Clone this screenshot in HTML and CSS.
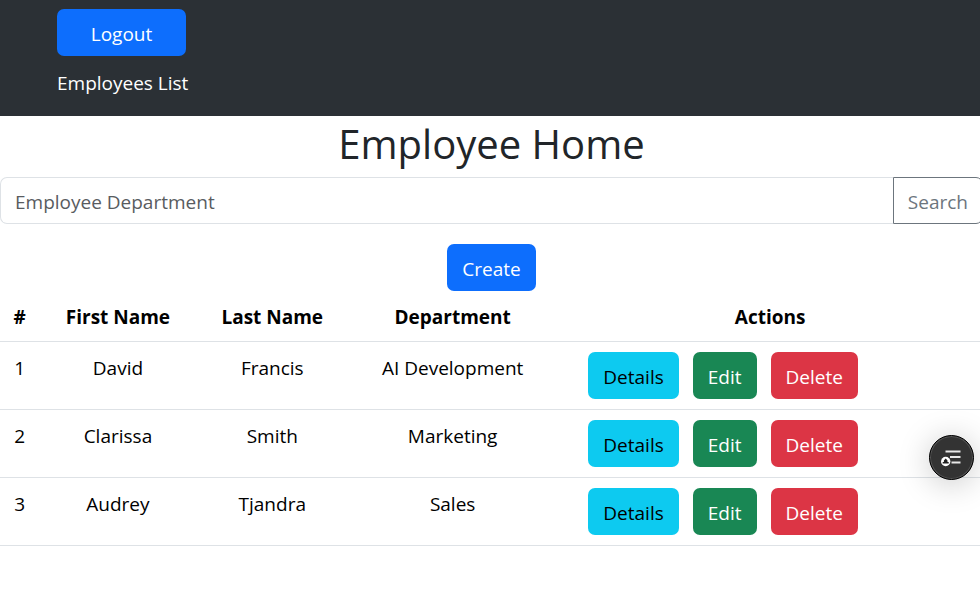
FILE: index.html
```html
<!DOCTYPE html>
<html lang="en">
<head>
<meta charset="utf-8">
<meta name="viewport" content="width=device-width, initial-scale=1">
<title>Employee Home</title>
<link rel="stylesheet" href="styles.css">
</head>
<body>
<nav class="navbar">
  <button type="button" class="btn btn-primary btn-logout">Logout</button>
  <a class="nav-link" href="#">Employees List</a>
</nav>
<main class="page">
  <h1 class="title">Employee Home</h1>
  <form class="search">
    <input class="search-input" type="text" placeholder="Employee Department" aria-label="Employee Department">
    <button type="button" class="btn btn-search">Search</button>
  </form>
  <div class="toolbar"><a class="btn btn-primary" href="#">Create</a></div>
  <table class="table">
    <colgroup><col class="col-id"><col class="col-first"><col class="col-last"><col class="col-dept"><col></colgroup>
    <thead>
      <tr><th scope="col">#</th><th scope="col">First Name</th><th scope="col">Last Name</th><th scope="col">Department</th><th scope="col">Actions</th></tr>
    </thead>
    <tbody>
      <tr><td>1</td><td>David</td><td>Francis</td><td>AI Development</td><td class="actions-cell"><div class="actions"><a class="btn btn-info" href="#">Details</a><a class="btn btn-success" href="#">Edit</a><button type="button" class="btn btn-danger">Delete</button></div></td></tr>
      <tr><td>2</td><td>Clarissa</td><td>Smith</td><td>Marketing</td><td class="actions-cell"><div class="actions"><a class="btn btn-info" href="#">Details</a><a class="btn btn-success" href="#">Edit</a><button type="button" class="btn btn-danger">Delete</button></div></td></tr>
      <tr><td>3</td><td>Audrey</td><td>Tjandra</td><td>Sales</td><td class="actions-cell"><div class="actions"><a class="btn btn-info" href="#">Details</a><a class="btn btn-success" href="#">Edit</a><button type="button" class="btn btn-danger">Delete</button></div></td></tr>
    </tbody>
  </table>
</main>
<button type="button" class="fab" aria-label="Open reader tools">
  <svg viewBox="0 0 22 18" width="22" height="18" aria-hidden="true">
    <path d="M4.500 2.500H19.500M9 8H19.500M10.500 13.500H19.500" stroke="#e8e8e8" stroke-width="1.800"/>
    <circle cx="4.700" cy="12.500" r="4.700" fill="#fff"/>
    <path d="M4.700 9.500L6.500 11.500V13H7.700V14.500H1.700V13H2.900V11.500Z" fill="#222"/>
  </svg>
</button>
</body>
</html>
```
FILE: styles.css
```css
* { box-sizing: border-box; }

body {
  margin: 0;
  overflow-x: hidden;
  background: #fff;
  color: #212529;
  font: 19px/30px "Segoe UI", "Open Sans", sans-serif;
}

.navbar {
  display: flex;
  flex-direction: column;
  align-items: flex-start;
  gap: 12px;
  padding: 9px 57px 18px;
  background: #2b3035;
}

.nav-link { color: #fff; text-decoration: none; }

.btn {
  display: inline-block;
  padding: 9px 14px 6px;
  border: 1px solid transparent;
  border-radius: 7px;
  font: inherit;
  text-align: center;
  text-decoration: none;
  cursor: pointer;
}

.btn-primary { background: #0d6efd; color: #fff; }
.btn-info { background: #0dcaf0; color: #000; }
.btn-success { background: #198754; color: #fff; }
.btn-danger { background: #dc3545; color: #fff; }
.btn-logout { min-width: 129px; }

/* The full-bleed row runs slightly past the right edge. */
.page { margin-right: -3px; }

.title {
  margin: 0;
  padding: 4px 0 9px;
  font-size: 40px;
  font-weight: 400;
  line-height: 48px;
  text-align: center;
}

.search { display: flex; }

.search-input {
  flex: 1;
  min-width: 0;
  padding: 9px 14px 6px;
  border: 1px solid #dee2e6;
  border-right: 0;
  border-radius: 7px 0 0 7px;
  background: #fff;
  color: #212529;
  font: inherit;
}

.search-input::placeholder { color: #595c5f; opacity: 1; }

.btn-search {
  min-width: 90px;
  border-color: #6c757d;
  border-radius: 0 7px 7px 0;
  background: #fff;
  color: #6c757d;
}

.toolbar { display: flex; justify-content: center; padding-top: 20px; }

.table {
  width: 100%;
  table-layout: fixed;
  border-collapse: separate;
  border-spacing: 0;
  color: #000;
  text-align: center;
}

.col-id { width: 4%; }
.col-first { width: 16%; }
.col-last { width: 15.4%; }
.col-dept { width: 21.3%; }

.table th,
.table td {
  padding: 11px 10px 9px;
  border-bottom: 1px solid #dee2e6;
  vertical-align: top;
}

.table th { font-weight: 700; }
.table .actions-cell { padding: 10px; }

.actions { display: flex; gap: 14px; padding-left: 21px; }

.fab {
  position: fixed;
  right: 6px;
  top: 435px;
  display: flex;
  align-items: center;
  justify-content: center;
  width: 45px;
  height: 45px;
  padding: 0;
  border: 1px solid #000;
  border-radius: 50%;
  background: #333;
  box-shadow: inset 0 0 0 1px #555, 0 4px 32px rgba(0, 0, 0, 0.22);
}
```
